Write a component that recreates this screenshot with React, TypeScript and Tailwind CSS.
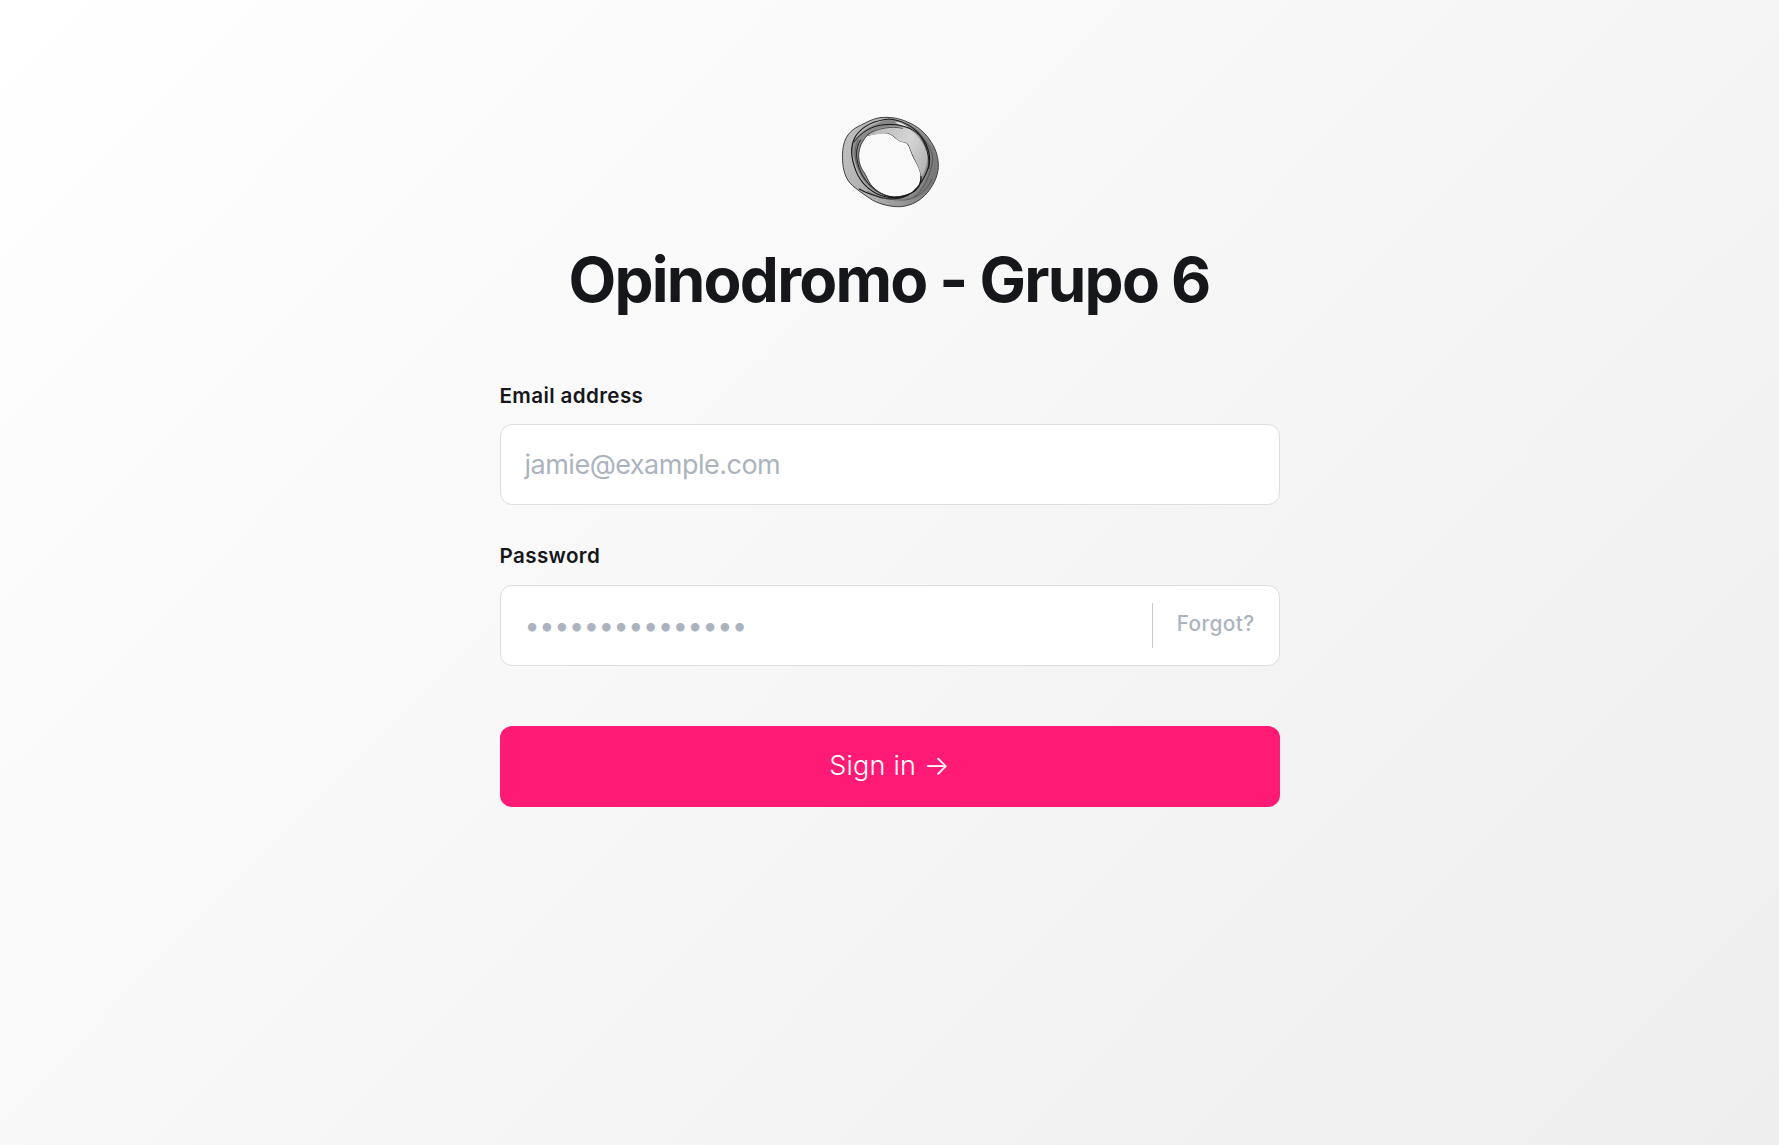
function Logo({ className }: { className: string }) {
  return (
    <svg className={className} viewBox="0 0 360 336" fill="none">
      <defs>
        <linearGradient id="ring" x1="40" y1="130" x2="325" y2="200" gradientUnits="userSpaceOnUse">
          <stop offset="0" stopColor="#bdbdbd" />
          <stop offset=".45" stopColor="#adadad" />
          <stop offset=".8" stopColor="#8f8f8f" />
          <stop offset="1" stopColor="#7c7c7c" />
        </linearGradient>
        <linearGradient id="fold" x1="110" y1="80" x2="290" y2="180" gradientUnits="userSpaceOnUse">
          <stop offset="0" stopColor="#b4b4b4" />
          <stop offset=".6" stopColor="#d6d6d6" />
          <stop offset="1" stopColor="#b4b4b4" />
        </linearGradient>
      </defs>
      <path
        fillRule="evenodd"
        fill="url(#ring)"
        stroke="#404040"
        strokeWidth="3"
        d="M150 38C178 35 207 39 232 51C262 62 289 86 304 112C318 133 326 160 325 188C322 218 309 242 292 263C272 286 246 302 212 305C186 306 154 300 127 285C106 271 91 261 75 248C53 231 45 213 40 188C36 162 36 132 44 109C52 86 70 70 92 61C111 51 129 41 150 38ZM111 92C96 108 87 128 86 151C86 174 92 188 104 205C113 222 118 237 132 249C147 264 168 274 192 276C219 275 243 267 258 256C270 246 273 231 273 214C272 194 260 175 251 158C242 141 241 127 231 114C218 109 212 111 203 104C192 96 186 87 172 84C153 81 134 86 111 92Z"
      />
      <path fill="url(#fold)" d="M108 92C125 75 145 67 168 67C194 62 219 64 239 73C263 89 282 115 291 145C295 174 285 198 274 217C270 190 258 172 249 151C240 133 240 123 231 114C218 109 211 111 203 104C192 94 184 85 170 84Z" />
      <path fill="#6a6a6a" opacity=".3" d="M228 54C267 68 298 103 315 143C324 175 321 207 307 235C288 270 253 292 216 282C251 275 273 253 285 226C300 195 303 165 292 136C278 102 254 75 228 54Z" />
      <path fill="#4a4a4a" opacity=".4" d="M64 128C76 88 108 66 165 46C198 42 228 54 250 74C211 61 160 60 127 80C104 96 85 121 86 151C86 174 92 188 104 205C113 222 118 237 132 249L158 270C104 249 77 201 64 128Z" />
      <path fill="#e6e6e6" d="M194 50C211 50 225 57 236 69C217 64 205 58 194 50Z" />
      <g stroke="#181818" strokeWidth="3.5" strokeLinecap="round">
        <path d="M88 252C112 266 134 272 158 279C195 286 227 278 247 262C270 242 285 218 294 190C306 158 294 121 274 94C251 65 217 46 177 42C138 46 100 62 79 90C62 116 62 151 73 184C84 220 107 249 140 266C174 282 218 283 253 259C267 247 274 232 273 214" />
        <path d="M72 111C93 82 126 61 165 59C204 55 244 66 269 91C289 119 301 158 296 190" strokeWidth="3" />
        <path d="M111 90C138 70 184 62 218 70" strokeWidth="2" />
        <path d="M92 105C74 130 79 163 87 187C96 216 118 242 138 257C158 270 181 279 203 276" strokeWidth="3" />
      </g>
      <g stroke="#444" strokeWidth="2">
        <path d="M85 104C66 137 77 182 98 216C115 243 144 264 175 274" />
        <path d="M112 258C145 280 183 286 225 285C265 279 292 254 306 222" />
        <path d="M268 88C304 123 314 155 305 183C294 224 280 254 253 276" />
      </g>
    </svg>
  );
}

export default function App() {
  return (
    <main className="flex min-h-[1145px] justify-center bg-[linear-gradient(135deg,#ffffff_0%,#eeeeee_100%)] font-['Inter',sans-serif] text-[#15171a]">
      <div className="flex w-[780px] flex-col pt-[105px]">
        <header className="flex flex-col items-center">
          <Logo className="h-28 w-[120px]" />
          <h1 className="mt-[26px] pr-px text-[62px] leading-[74px] font-bold tracking-[-1.77px] whitespace-nowrap">
            Opinodromo - Grupo 6
          </h1>
        </header>
        <form className="mt-[67px] flex flex-col">
          <label className="text-[20.6px] leading-6 font-[560] tracking-[0.38px]">Email address</label>
          <div className="mt-4 flex h-[81px] items-center rounded-[12px] border border-[#dddedf] bg-white px-6">
            <span className="text-[27px] leading-8 tracking-[-0.5px] text-[#abb4be]">jamie@example.com</span>
          </div>
          <label className="mt-[39px] text-[20.6px] leading-6 font-[560] tracking-[0.38px]">Password</label>
          <div className="mt-[17px] flex h-[81px] items-center rounded-[12px] border border-[#dddedf] bg-white px-6">
            <span className="text-[27px] leading-8 tracking-[-0.36px] text-[#abb4be]">•••••••••••••••</span>
            <span className="ml-auto h-[45px] w-px bg-[#c8cacc]" />
            <span className="-mt-[3px] ml-6 text-[20.8px] leading-6 font-[530] tracking-[0.38px] text-[#abb4be]">Forgot?</span>
          </div>
          <button type="button" className="mt-[60px] h-[81px] rounded-[12px] bg-[#ff1a75] pb-px text-[27px] leading-8 font-light tracking-[0.2px] text-white">
            Sign in →
          </button>
        </form>
      </div>
    </main>
  );
}
